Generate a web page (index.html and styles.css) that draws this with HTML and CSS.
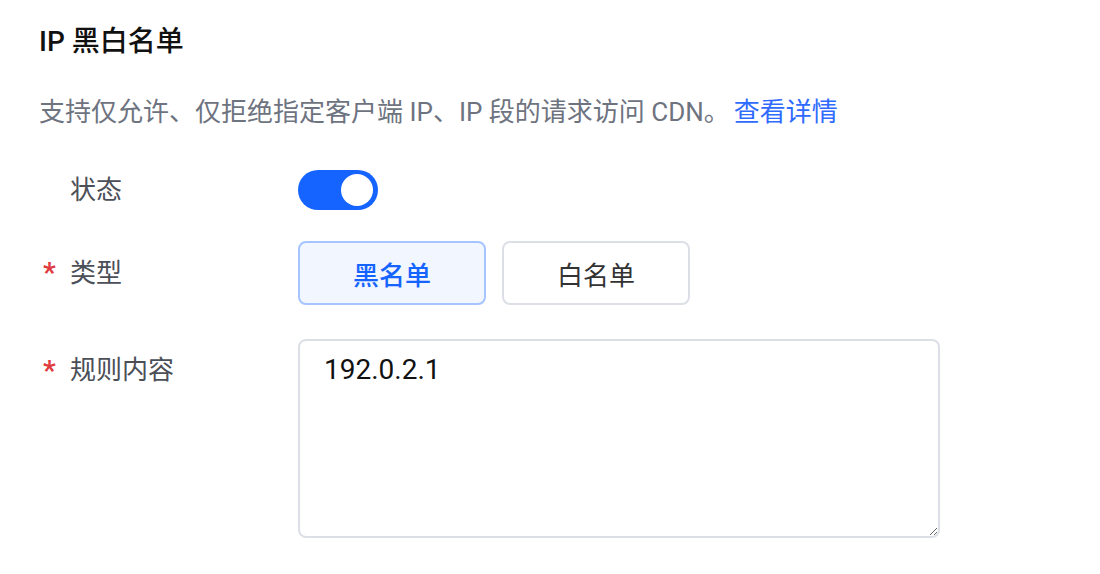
FILE: index.html
```html
<!DOCTYPE html>
<html lang="zh-CN">
    <head>
        <meta charset="UTF-8" />
        <meta name="viewport" content="width=device-width, initial-scale=1.0" />
        <title>IP 黑白名单</title>
        <link rel="stylesheet" href="styles.css">
    </head>
    <body>
        <div class="container">
            <h2 class="title">IP 黑白名单</h2>
            <p class="desc">
                支持仅允许、仅拒绝指定客户端 IP、IP 段的请求访问 CDN。<a href="#" class="link">查看详情</a>
            </p>

            <form class="form">
                <div class="row row-switch">
                    <label class="label">状态</label>
                    <div class="switch is-on"><span class="knob"></span></div>
                </div>

                <div class="row row-type">
                    <label class="label required">类型</label>
                    <div class="choices">
                        <button type="button" class="choice active">黑名单</button>
                        <button type="button" class="choice">白名单</button>
                    </div>
                </div>

                <div class="row row-rules">
                    <label class="label required" for="rules">规则内容</label>
                    <textarea id="rules" class="rules">192.0.2.1</textarea>
                </div>
            </form>
        </div>
    </body>
</html>
```

FILE: styles.css
```css
body {
    margin: 0;
    font-family: Roboto, "Noto Sans CJK SC", sans-serif;
    color: #000;
    background: #fff;
}
.container {
    padding: 22px 39px;
}
.title {
    margin: 0;
    font-size: 28px;
    font-weight: 500;
    line-height: 40px;
    color: #111;
}
.desc {
    margin: 30px 0 0;
    font-size: 26px;
    line-height: 40px;
    color: #6e7380;
}
.link {
    color: #2f6bff;
    text-decoration: none;
    margin-left: 4px;
}
.form {
    margin-top: 38px;
}
.row {
    display: flex;
    align-items: flex-start;
}
.label {
    width: 228px;
    padding-left: 31px;
    flex-shrink: 0;
    font-size: 26px;
    line-height: 40px;
    color: #4b4f57;
    position: relative;
}
.required::before {
    content: "*";
    position: absolute;
    left: 4px;
    top: 12px;
    color: #e0393e;
    font-size: 28px;
    font-weight: 700;
    line-height: 40px;
}
.row-type {
    margin-top: 31px;
}
.row-type .label {
    line-height: 64px;
}
.row-rules {
    margin-top: 34px;
}
.row-rules .label {
    padding-top: 11px;
}
.switch {
    width: 80px;
    height: 40px;
    border-radius: 20px;
    background: #1664ff;
    position: relative;
}
.knob {
    position: absolute;
    top: 4px;
    right: 5px;
    width: 32px;
    height: 32px;
    border-radius: 50%;
    background: #fff;
}
.choices {
    display: flex;
    gap: 16px;
}
.choice {
    width: 188px;
    height: 64px;
    border: 2px solid #dcdfe6;
    border-radius: 8px;
    background: #fff;
    font-family: inherit;
    font-size: 26px;
    color: #333;
    cursor: pointer;
}
.choice.active {
    border-color: #a6c4ff;
    background: #f2f6ff;
    color: #1664ff;
    font-weight: 500;
}
.rules {
    box-sizing: border-box;
    width: 642px;
    height: 199px;
    margin: 0;
    padding: 9px 24px;
    border: 2px solid #dcdfe6;
    border-radius: 8px;
    font-family: Roboto, "Noto Sans CJK SC", sans-serif;
    font-size: 28px;
    line-height: 40px;
    color: #111;
    outline: none;
}
```
